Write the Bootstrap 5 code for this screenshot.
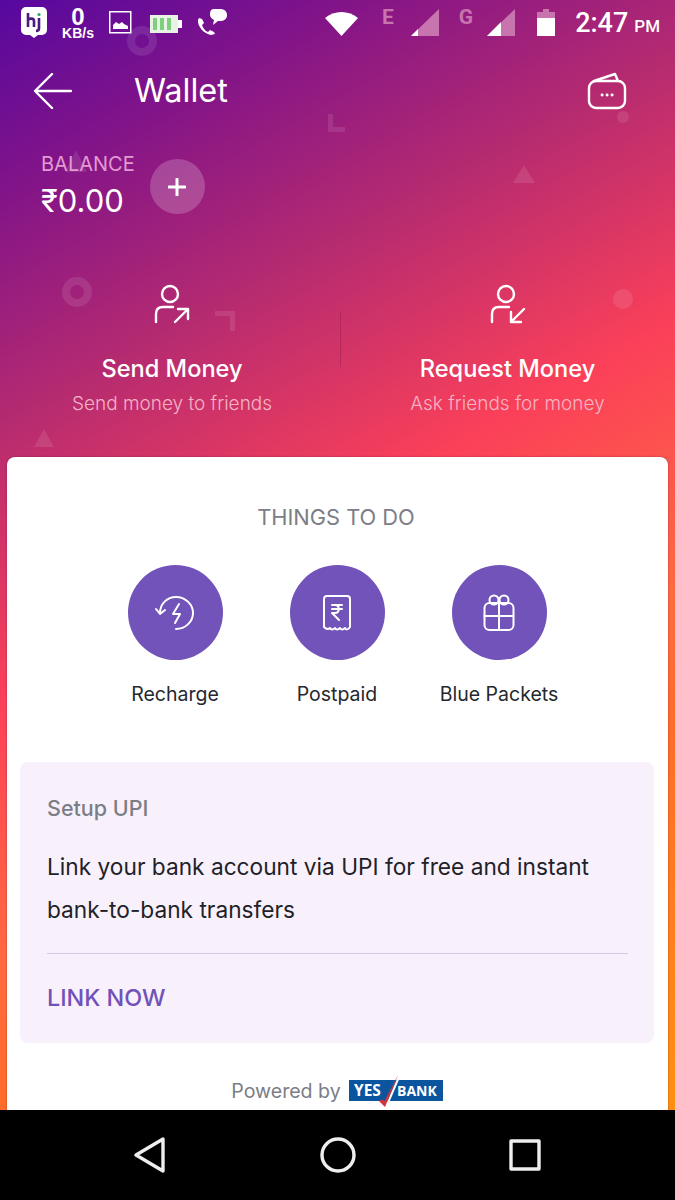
<!DOCTYPE html>
<html lang="en">
<head>
<meta charset="utf-8">
<title>Wallet</title>
<link href="https://cdn.jsdelivr.net/npm/bootstrap@5.3.0/dist/css/bootstrap.min.css" rel="stylesheet">
<style>
html,body{margin:0;background:#000;}
body{width:675px;height:1200px;overflow:hidden;font-family:Inter,"Liberation Sans",sans-serif;color:#fff;}
.scr{height:1110px;overflow:hidden;position:relative;background:linear-gradient(151deg,#56089f 0%,#851587 14%,#b62b70 29%,#fb4059 47%,#ff6a40 65%,#ff6c2a 74%,#ff9010 100%);}
.deco{position:absolute;left:0;top:0;width:675px;height:480px;}
.layer{position:relative;}
.stat{height:46px;padding:7px 15px 0 21px;}
.kb{width:62px;text-align:center;font-family:"Liberation Sans",sans-serif;font-weight:700;line-height:1;}
.kb b{display:block;font-size:24px;line-height:20px;}
.kb span{display:block;font-size:14px;line-height:13px;}
.sig-l{font-family:Roboto,sans-serif;font-weight:700;font-size:21px;line-height:20px;color:#c874ae;}
.clock{font-family:Roboto,sans-serif;font-weight:500;font-size:27px;line-height:32px;margin-left:20px;white-space:nowrap;}
.clock small{font-size:17px;margin-left:6px;font-weight:500;}
.head{height:90px;padding:0 48px 0 34px;}
.ttl{font-size:32.5px;font-weight:400;margin-left:62px;line-height:1;}
.bal{padding:17px 0 0 41px;height:148px;}
.bal-l{font-size:20px;line-height:22px;color:#e29ad0;}
.bal-v{font-size:31px;line-height:40px;margin-top:6px;}
.addc{width:55px;height:55px;border-radius:50%;background:rgba(255,255,255,.2);margin-left:15px;margin-top:6px;}
.acts{height:173px;position:relative;}
.act{text-align:center;}
.act1{width:344px;}
.act2{width:327px;}
.act h2{font-size:23.6px;font-weight:500;line-height:28px;margin:31px 0 0;color:#fff;}
.act p{font-size:19px;line-height:24px;margin:9px 0 0;color:#f5b3c5;font-weight:300;white-space:nowrap;}
.act svg{display:block;margin:0 auto;}
.vsep{position:absolute;left:340px;top:27px;height:56px;width:1px;background:rgba(120,20,70,.3);}
.sheet{margin:0 7px;background:#fff;border-radius:8px;height:700px;padding:0 14px 0 13px;color:#25282e;box-shadow:0 0 2px rgba(60,20,60,.5);}
.sheet-t{text-align:center;font-size:21.8px;line-height:26px;color:#7b7e86;padding-top:47px;padding-right:2px;}
.todo{margin-top:35px;}
.todo-i{width:162px;text-align:center;font-size:19.5px;line-height:24px;}
.disc{width:95px;height:95px;border-radius:50%;background:#7153ba;margin:0 auto 22px;}
.upi{background:#f8f1fc;border-radius:8px;height:281px;margin-top:56px;padding:33px 26px 0 27px;}
.upi-h{font-size:21.5px;line-height:26px;color:#7b7e86;font-weight:500;}
.upi-b{font-size:22.7px;line-height:43px;margin-top:24px;color:#1f2228;}
.upi-r{border-top:1px solid #d4c8e8;margin-top:22px;}
.upi-a{font-size:23.4px;line-height:28px;font-weight:500;color:#7052b8;margin-top:30px;}
.pow{margin-top:31px;font-size:19.6px;line-height:26px;color:#7b7e86;gap:8px;}
.pow svg{display:block;}
.yes{font-family:"Open Sans","Liberation Sans",sans-serif;font-weight:700;}
.botnav{height:90px;background:#000;padding:0 134px;}
</style>
</head>
<body>
<div class="scr">
  <svg class="deco" viewBox="0 0 675 480" fill="none">
    <g stroke="#fff" stroke-opacity=".1">
      <circle cx="142" cy="41" r="11" stroke-width="8"/>
      <circle cx="77" cy="292" r="11" stroke-width="8"/>
    </g>
    <g fill="#fff" fill-opacity=".1">
      <path d="M76 150l11 22H65z"/>
      <path d="M328 114h5v13h12v5h-17z"/>
      <path d="M215 311h20v20h-5v-15h-15z"/>
      <circle cx="623" cy="117" r="6"/>
      <circle cx="623" cy="299" r="10"/>
      <path d="M524 165l11 18h-22z"/>
      <path d="M44 429l10 18H34z"/>
    </g>
  </svg>
  <div class="layer">
    <div class="stat d-flex align-items-start">
      <svg width="26" height="31" viewBox="0 0 26 31"><path d="M5 0h16a5 5 0 0 1 5 5v18a5 5 0 0 1-5 5h-4l-4 3-4-3H5a5 5 0 0 1-5-5V5a5 5 0 0 1 5-5z" fill="#fff"/><path d="M7 6v14M7 13c1-2 6-2 6 1v6M18 11v10c0 2-1 3-3 3" stroke="#4d1a7f" stroke-width="2.6" fill="none"/><circle cx="18" cy="7.5" r="1.6" fill="#2fa36b"/></svg>
      <div class="kb ms-0"><b>0</b><span>KB/s</span></div>
      <svg class="mt-1" width="23" height="23" viewBox="0 0 23 23" fill="none"><rect x=".75" y=".75" width="21" height="21" stroke="#fff" stroke-width="1.5"/><path d="M4 18v-4l3-3 3 2 3-2 2 2 4 2v3z" fill="#fff"/></svg>
      <svg class="mt-2" style="margin-left:18px" width="32" height="18" viewBox="0 0 32 18"><rect width="28" height="18" fill="#e9f3e3"/><path d="M3 3h4v12H3zM10 3h4v12h-4zM17 3h4v12h-4z" fill="#7fcf80"/><rect x="28" y="5" width="4" height="8" fill="#fff"/></svg>
      <svg style="margin-left:14px;margin-top:2px" width="31" height="28" viewBox="0 0 31 28" fill="none"><path d="M2 11c-1 6 6 14 13 15l4-1-1-2-4-2-2 2c-3-1-5-4-6-7l2-2-2-4-3-1z" fill="#fff"/><path d="M18 0h6c4 0 7 2 7 6s-3 6-7 6h-2l-5 4 1-5c-2-1-4-3-4-5 0-4 1-6 4-6z" fill="#fff"/></svg>
      <svg class="ms-auto mt-1" style="transform:translateX(-3px)" width="33" height="25" viewBox="0 0 33 25"><path d="M0 7C9-1 24-1 33 7L16.5 25z" fill="#fff"/></svg>
      <div class="sig-l" style="margin-left:21px">E</div>
      <svg style="margin-left:17px;margin-top:2px" width="28" height="27" viewBox="0 0 28 27"><path d="M28 0v27H0z" fill="#c874ae"/><path d="M7 20v7H0z" fill="#fff"/></svg>
      <div class="sig-l" style="margin-left:20px">G</div>
      <svg style="margin-left:14px;margin-top:2px" width="28" height="27" viewBox="0 0 28 27"><path d="M28 0v27H0z" fill="#c874ae"/><path d="M14 13v14H0z" fill="#fff"/></svg>
      <svg style="margin-left:22px;margin-top:2px" width="18" height="27" viewBox="0 0 18 27"><path d="M6 0h6v3h6v8H0V3h6z" fill="#c874ae"/><rect y="9" width="18" height="18" fill="#fff"/></svg>
      <div class="clock">2:47<small>PM</small></div>
    </div>
    <div class="head d-flex align-items-center">
      <svg width="38" height="36" viewBox="0 0 38 36" fill="none" stroke="#fff" stroke-width="2.4" stroke-linecap="round" stroke-linejoin="round"><path d="M37 18H1M18 1L1 18l17 17"/></svg>
      <div class="ttl">Wallet</div>
      <svg class="ms-auto" width="40" height="38" viewBox="0 0 40 38" fill="none" stroke="#fff" stroke-width="2.4" stroke-linecap="round" stroke-linejoin="round"><rect x="2" y="9" width="36" height="27" rx="7"/><path d="M7 9l21-7 3 7"/><path d="M15 23h.2M20 23h.2M25 23h.2" stroke-width="2.8"/></svg>
    </div>
    <div class="bal d-flex align-items-start">
      <div><div class="bal-l">BALANCE</div><div class="bal-v">₹0.00</div></div>
      <div class="addc d-flex align-items-center justify-content-center">
        <svg width="18" height="18" viewBox="0 0 18 18"><path d="M9 1v16M1 9h16" stroke="#fff" stroke-width="3" stroke-linecap="round"/></svg>
      </div>
    </div>
    <div class="acts d-flex">
      <div class="act act1">
        <svg width="36" height="40" viewBox="0 0 36 40" fill="none" stroke="#fff" stroke-width="2.4" stroke-linecap="round" stroke-linejoin="round"><circle cx="16" cy="10" r="8"/><path d="M2 38V30c0-5 3-7 7-7h10M21 38l13-13M24 25h10v10"/></svg>
        <h2>Send Money</h2>
        <p>Send money to friends</p>
      </div>
      <div class="act act2">
        <svg width="36" height="40" viewBox="0 0 36 40" fill="none" stroke="#fff" stroke-width="2.4" stroke-linecap="round" stroke-linejoin="round"><circle cx="16" cy="10" r="8"/><path d="M2 38V30c0-5 3-7 7-7h10M34 25L21 38M21 28v10h10"/></svg>
        <h2>Request Money</h2>
        <p>Ask friends for money</p>
      </div>
      <div class="vsep"></div>
    </div>
    <div class="sheet">
      <div class="sheet-t">THINGS TO DO</div>
      <div class="todo d-flex justify-content-center">
        <div class="todo-i">
          <div class="disc d-flex align-items-center justify-content-center">
            <svg width="40" height="36" viewBox="0 0 40 36" fill="none" stroke="#fff" stroke-width="2" stroke-linecap="round" stroke-linejoin="round"><path d="M5 18C5 9 12 2 21 2s17 7 17 16-8 16-17 16"/><path d="M1 14l4 5 5-4"/><path d="M24 9l-6 10h7l-5 9"/></svg>
          </div>Recharge
        </div>
        <div class="todo-i">
          <div class="disc d-flex align-items-center justify-content-center">
            <svg width="28" height="36" viewBox="0 0 28 36" fill="none" stroke="#fff" stroke-width="2" stroke-linecap="round" stroke-linejoin="round"><path d="M1 32V4a3 3 0 0 1 3-3h20a3 3 0 0 1 3 3v28c-2 3-4 3-5 1-2 2-4 2-5 0-2 2-4 2-5 0-2 2-4 2-5 0-2 2-4 1-6-1z"/><path d="M9 10h10M9 14h10M12 10c5 0 5 8 0 8h-3l7 7"/></svg>
          </div>Postpaid
        </div>
        <div class="todo-i">
          <div class="disc d-flex align-items-center justify-content-center">
            <svg width="32" height="38" viewBox="0 0 32 38" fill="none" stroke="#fff" stroke-width="2" stroke-linecap="round" stroke-linejoin="round"><rect x="1.5" y="9" width="29" height="27" rx="5"/><path d="M16 9v27M1.5 22h29"/><circle cx="11" cy="6" r="4.5"/><circle cx="21" cy="6" r="4.5"/></svg>
          </div>Blue Packets
        </div>
      </div>
      <div class="upi">
        <div class="upi-h">Setup UPI</div>
        <div class="upi-b">Link your bank account via UPI for free and instant bank-to-bank transfers</div>
        <div class="upi-r"></div>
        <div class="upi-a">LINK NOW</div>
      </div>
      <div class="pow d-flex justify-content-center align-items-center">
        <span>Powered by</span>
        <svg width="94" height="34" viewBox="0 0 94 34"><rect y="6" width="94" height="21" fill="#0b559f"/><text x="5" y="22" class="yes" font-size="15.5" fill="#fff">YES</text><text x="48" y="22" class="yes" font-size="14" fill="#fff">BANK</text><path d="M50 3L38 31" stroke="#fff" stroke-width="2"/><path d="M49 1L36 33l-6-6 3-1.5 2.5 1.500z" fill="#d6323a"/></svg>
      </div>
    </div>
  </div>
</div>
<div class="botnav d-flex align-items-center justify-content-between">
  <svg width="32" height="36" viewBox="0 0 32 36" fill="none" stroke="#eee" stroke-width="3.4" stroke-linejoin="round"><path d="M29 2v32L2 18z"/></svg>
  <svg width="36" height="36" viewBox="0 0 36 36" fill="none" stroke="#eee" stroke-width="3.4"><circle cx="18" cy="18" r="16"/></svg>
  <svg width="32" height="32" viewBox="0 0 32 32" fill="none" stroke="#eee" stroke-width="3.4" stroke-linejoin="round"><rect x="2" y="2" width="28" height="28"/></svg>
</div>
<script src="https://cdn.jsdelivr.net/npm/bootstrap@5.3.0/dist/js/bootstrap.bundle.min.js"></script>
</body>
</html>
